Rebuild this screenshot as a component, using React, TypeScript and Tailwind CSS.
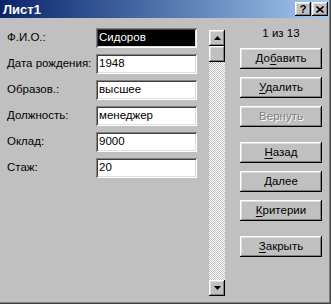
import React from "react";

const raised =
  "bg-[#c0c0c0] shadow-[inset_-1px_-1px_#000,inset_1px_1px_#fff,inset_-2px_-2px_#808080,inset_2px_2px_#dfdfdf]";
const sunken =
  "shadow-[inset_1px_1px_#808080,inset_-1px_-1px_#fff,inset_2px_2px_#404040,inset_-2px_-2px_#dfdfdf]";

const fields = [
  { label: "Ф.И.О.:", value: "Сидоров", selected: true },
  { label: "Дата рождения:", value: "1948" },
  { label: "Образов.:", value: "высшее" },
  { label: "Должность:", value: "менеджер" },
  { label: "Оклад:", value: "9000" },
  { label: "Стаж:", value: "20" },
];

function Btn({ pre = "", hot = "", post = "", disabled = false, extra = "" }: { pre?: string; hot?: string; post?: string; disabled?: boolean; extra?: string }) {
  return (
    <div className={`${raised} ${extra} h-[21px] w-[82px] flex items-center justify-center`}>
      <span className={disabled ? "text-[#808080] [text-shadow:1px_1px_#fff]" : "text-black"}>
        {pre}
        <span className="underline underline-offset-2">{hot}</span>
        {post}
      </span>
    </div>
  );
}

function Arrow({ down = false }: { down?: boolean }) {
  return (
    <div className={`${raised} w-[16px] h-[16px] flex items-center justify-center`}>
      <svg width="7" height="4" viewBox="0 0 7 4">
        {down ? <polygon points="0,0 7,0 3.5,4" fill="#000" /> : <polygon points="0,4 7,4 3.5,0" fill="#000" />}
      </svg>
    </div>
  );
}

export default function App() {
  return (
    <div
      className="w-[331px] h-[304px] bg-[#c0c0c0] flex flex-col shadow-[inset_-1px_-1px_#404040,inset_-2px_-2px_#808080] text-[11.5px] leading-none"
      style={{ fontFamily: '"Liberation Sans", Arial, sans-serif' }}
    >
      {/* title bar */}
      <div className="h-[18px] mr-[2px] flex items-center justify-between bg-gradient-to-r from-[#0a246a] to-[#a6caf0]">
        <span className="pl-[3px] text-white font-bold text-[13px]">Лист1</span>
        <div className="flex gap-[1px] pr-[1px]">
          <div className={`${raised} w-[16px] h-[14px] flex items-center justify-center font-bold text-[11px]`}>?</div>
          <div className={`${raised} w-[16px] h-[14px] flex items-center justify-center`}>
            <svg width="8" height="7" viewBox="0 0 8 7">
              <path d="M0.5 0.5 L7.5 6.5 M7.5 0.5 L0.5 6.5" stroke="#000" strokeWidth="1.6" />
            </svg>
          </div>
        </div>
      </div>

      <div className="flex items-start">
        {/* fields */}
        <div className="pl-[7px] pt-[10px] flex flex-col gap-[6px]">
          {fields.map((f) => (
            <div key={f.label} className="flex items-center h-[20px]">
              <span className="w-[89px] text-black">{f.label}</span>
              <div className={`${sunken} bg-white w-[101px] h-[20px] p-[2px]`}>
                <div className={`h-full flex items-center pl-[1px] ${f.selected ? "bg-black text-white" : "text-black"}`}>
                  {f.value}
                </div>
              </div>
            </div>
          ))}
        </div>

        {/* scrollbar */}
        <div className="ml-[12px] mt-[12px] w-[16px] h-[266px] flex flex-col bg-[repeating-conic-gradient(#c0c0c0_0%_25%,#fff_0%_50%)] bg-[length:2px_2px]">
          <Arrow />
          <div className={`${raised} w-[16px] h-[16px]`} />
          <div className="flex-1" />
          <Arrow down />
        </div>

        {/* buttons */}
        <div className="ml-[15px] flex flex-col">
          <div className="w-[82px] h-[30px] pt-[10px] text-center text-black">1 из 13</div>
          <Btn pre="До" hot="б" post="авить" />
          <Btn hot="У" post="далить" extra="mt-[8px]" />
          <Btn pre="Вернуть" disabled extra="mt-[8px]" />
          <Btn hot="Н" post="азад" extra="mt-[15px]" />
          <Btn hot="Д" post="алее" extra="mt-[8px]" />
          <Btn hot="К" post="ритерии" extra="mt-[8px]" />
          <Btn hot="З" post="акрыть" extra="mt-[15px]" />
        </div>
      </div>
    </div>
  );
}
